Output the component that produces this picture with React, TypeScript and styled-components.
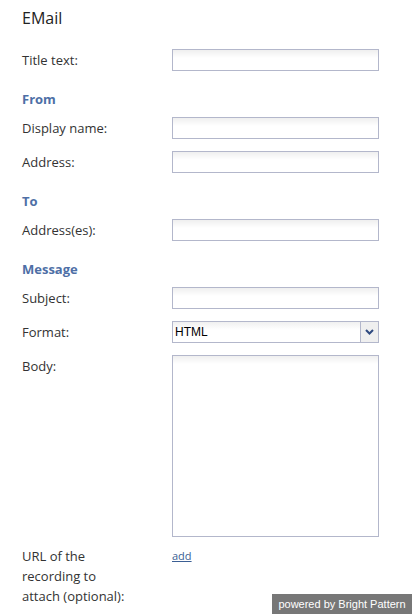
import styled, { createGlobalStyle } from 'styled-components'

const GlobalStyle = createGlobalStyle`
  html, body {
    margin: 0;
    padding: 0;
    background: #ffffff;
  }
  body {
    font-family: 'Open Sans', 'DejaVu Sans', sans-serif;
    color: #333333;
  }
`

type FieldProps = {
  label: string
  children: React.ReactNode
}

function Field({ label, children }: FieldProps) {
  return (
    <Row>
      <Label>{label}</Label>
      {children}
    </Row>
  )
}

export default function App() {
  return (
    <>
      <GlobalStyle />
      <Page>
        <Title>EMail</Title>
        <Field label="Title text:">
          <TextInput />
        </Field>

        <Section>From</Section>
        <Field label="Display name:">
          <TextInput />
        </Field>
        <Field label="Address:">
          <TextInput />
        </Field>

        <Section>To</Section>
        <Field label="Address(es):">
          <TextInput />
        </Field>

        <Section>Message</Section>
        <Field label="Subject:">
          <TextInput />
        </Field>
        <Field label="Format:">
          <Select>
            <SelectValue>HTML</SelectValue>
            <SelectButton>
              <svg width="9" height="6" viewBox="0 0 9 6">
                <path d="M1 1 L4.5 4.5 L8 1" fill="none" stroke="#2f4a80" strokeWidth="2" />
              </svg>
            </SelectButton>
          </Select>
        </Field>
        <Field label="Body:">
          <TextArea />
        </Field>

        <AttachRow>
          <AttachLabel>
            URL of the
            <br />
            recording to
            <br />
            attach (optional):
          </AttachLabel>
          <AddLink href="#">add</AddLink>
        </AttachRow>
      </Page>
      <Powered>powered by Bright Pattern</Powered>
    </>
  )
}

const Page = styled.div`
  padding: 6px 0 0 22px;
  width: 357px;
`

const Title = styled.h1`
  margin: 0 0 19px;
  font-size: 16px;
  line-height: 24px;
  font-weight: normal;
  color: #222222;
`

const Section = styled.h2`
  margin: 18px 0 8px;
  font-size: 13px;
  line-height: 20px;
  font-weight: bold;
  color: #4e6fa6;
`

const Row = styled.div`
  display: flex;
  align-items: flex-start;
  & + & {
    margin-top: 12px;
  }
`

const Label = styled.div`
  width: 150px;
  flex-shrink: 0;
  font-size: 13px;
  line-height: 22px;
  color: #333333;
`

const TextInput = styled.div`
  box-sizing: border-box;
  width: 207px;
  height: 22px;
  border: 1px solid #b3b7cb;
  background: linear-gradient(#efefef, #ffffff 8px);
`

const TextArea = styled(TextInput)`
  height: 182px;
`

const Select = styled.div`
  box-sizing: border-box;
  width: 207px;
  height: 22px;
  border: 1px solid #b3b7cb;
  display: flex;
  background: linear-gradient(#f0f0f0, #ffffff 8px);
`

const SelectValue = styled.div`
  flex: 1;
  padding-left: 2px;
  font-family: 'Liberation Sans', Arial, sans-serif;
  font-size: 12px;
  line-height: 20px;
  color: #000000;
`

const SelectButton = styled.div`
  width: 17px;
  border-left: 1px solid #b3b7cb;
  background: #efefef;
  display: flex;
  align-items: center;
  justify-content: center;
`

const AttachRow = styled.div`
  display: flex;
  align-items: flex-start;
  margin-top: 9px;
`

const AttachLabel = styled.div`
  width: 150px;
  flex-shrink: 0;
  font-size: 13px;
  line-height: 20px;
  color: #333333;
`

const AddLink = styled.a`
  font-size: 11px;
  line-height: 20px;
  color: #3b5f94;
  text-decoration: underline;
`

const Powered = styled.div`
  position: fixed;
  right: 0;
  bottom: 0;
  width: 140px;
  height: 20px;
  background: #777777;
  color: #ffffff;
  font-family: 'Liberation Sans', Arial, sans-serif;
  font-size: 11px;
  line-height: 20px;
  text-align: center;
`
